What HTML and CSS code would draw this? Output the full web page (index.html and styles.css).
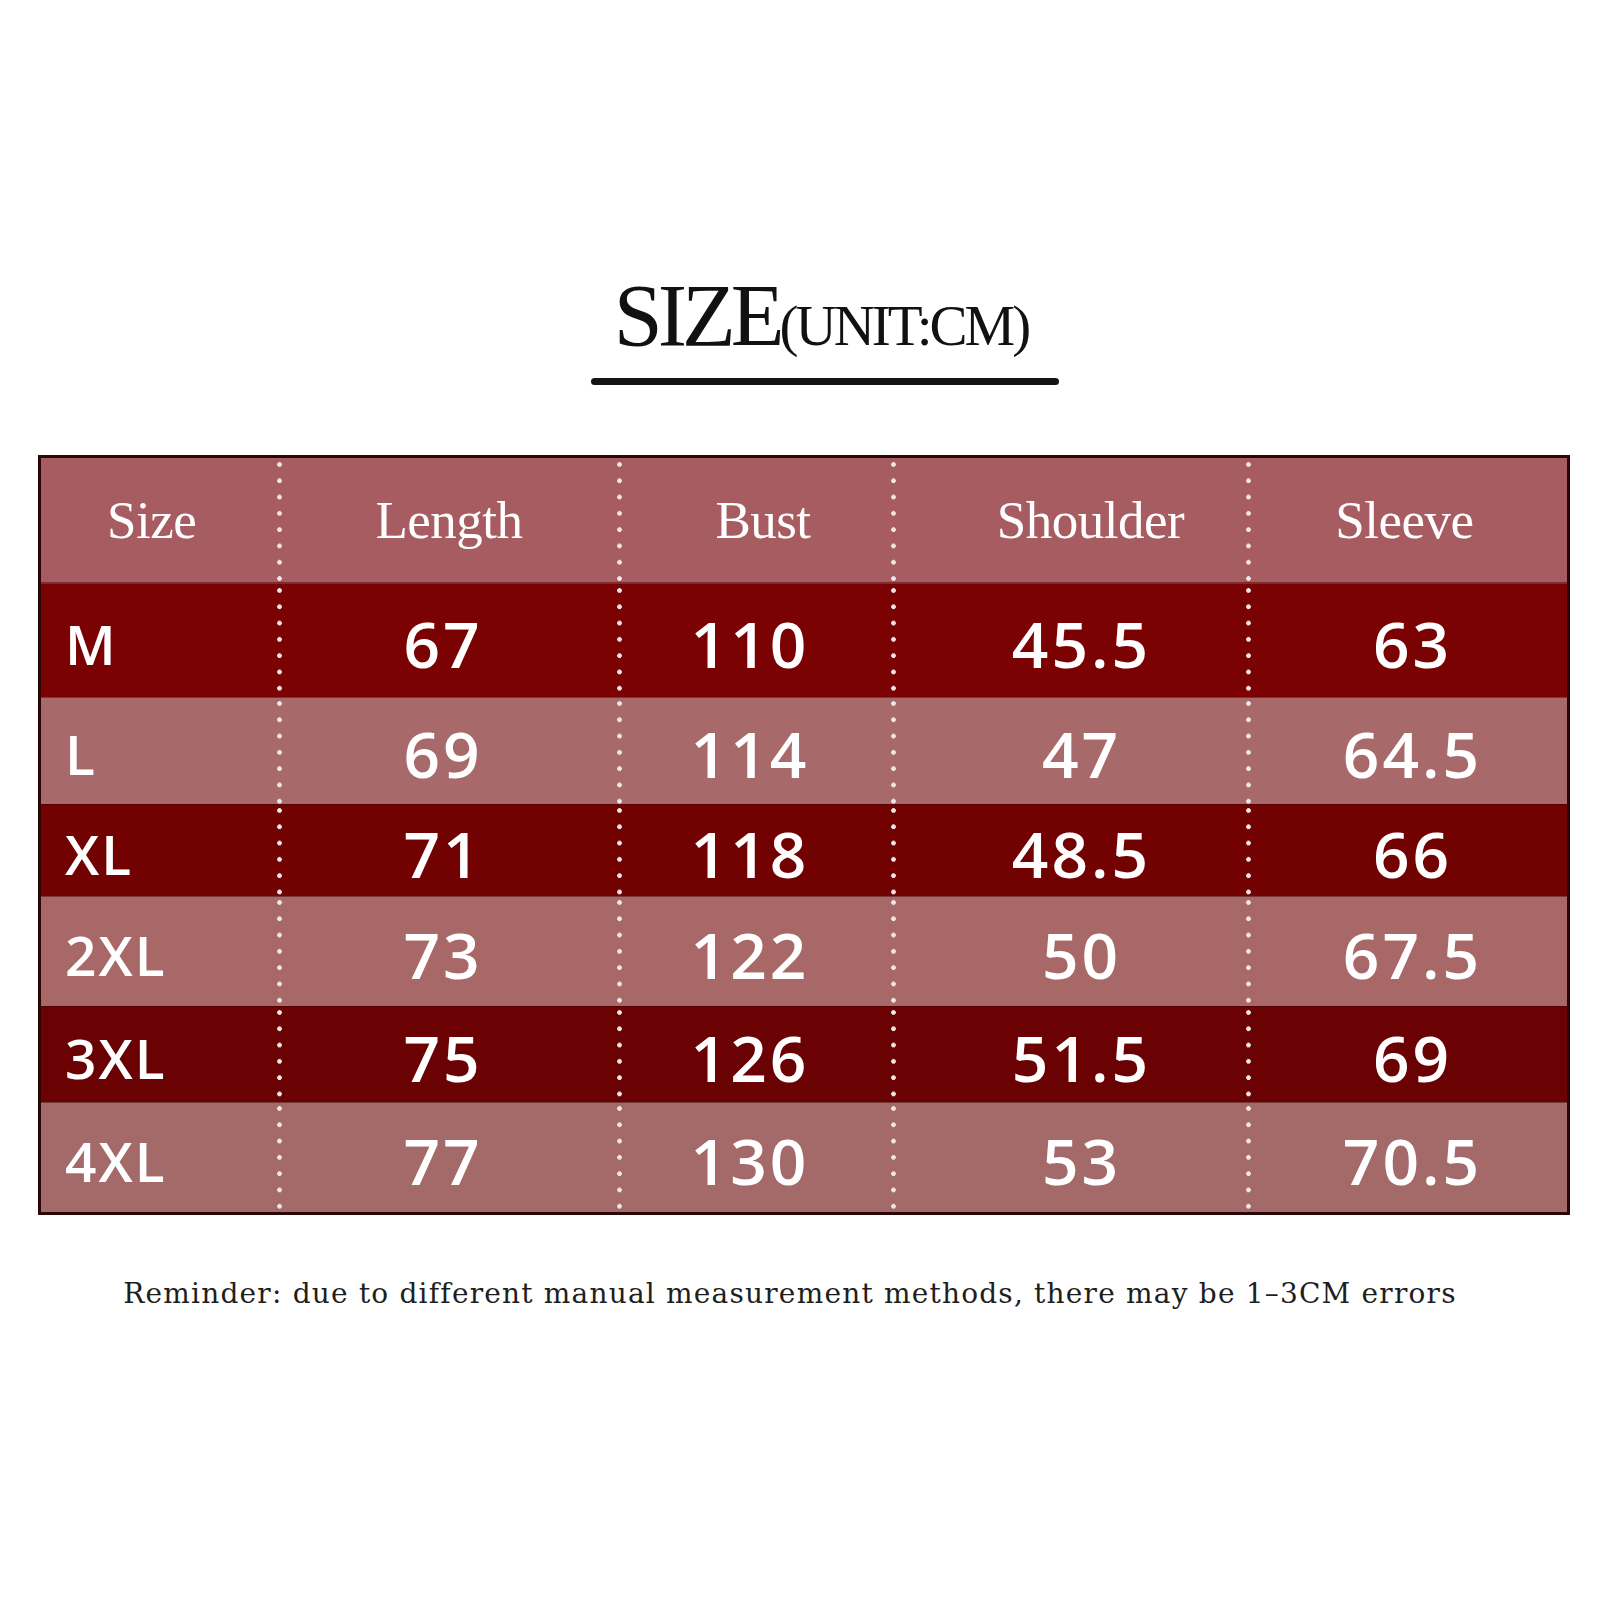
FILE: index.html
```html
<!DOCTYPE html>
<html lang="en">
<head>
<meta charset="utf-8">
<title>Size chart</title>
<link rel="stylesheet" href="styles.css">
</head>
<body>
<main class="page">
  <header class="heading">
    <h1 class="title"><span class="title-main">SIZE</span><span class="title-unit">(UNIT:CM)</span></h1>
    <div class="rule"></div>
  </header>

  <section class="chart">
    <div class="row row-head">
      <div class="cell cell-first">Size</div>
      <div class="cell">Length</div>
      <div class="cell">Bust</div>
      <div class="cell">Shoulder</div>
      <div class="cell">Sleeve</div>
    </div>
    <div class="row row-dark row-m">
      <div class="cell cell-first">M</div>
      <div class="cell">67</div>
      <div class="cell">110</div>
      <div class="cell">45.5</div>
      <div class="cell">63</div>
    </div>
    <div class="row row-light row-l">
      <div class="cell cell-first">L</div>
      <div class="cell">69</div>
      <div class="cell">114</div>
      <div class="cell">47</div>
      <div class="cell">64.5</div>
    </div>
    <div class="row row-dark row-xl">
      <div class="cell cell-first">XL</div>
      <div class="cell">71</div>
      <div class="cell">118</div>
      <div class="cell">48.5</div>
      <div class="cell">66</div>
    </div>
    <div class="row row-light row-2xl">
      <div class="cell cell-first">2XL</div>
      <div class="cell">73</div>
      <div class="cell">122</div>
      <div class="cell">50</div>
      <div class="cell">67.5</div>
    </div>
    <div class="row row-dark row-3xl">
      <div class="cell cell-first">3XL</div>
      <div class="cell">75</div>
      <div class="cell">126</div>
      <div class="cell">51.5</div>
      <div class="cell">69</div>
    </div>
    <div class="row row-light row-4xl">
      <div class="cell cell-first">4XL</div>
      <div class="cell">77</div>
      <div class="cell">130</div>
      <div class="cell">53</div>
      <div class="cell">70.5</div>
    </div>
  </section>

  <p class="note">Reminder: due to different manual measurement methods, there may be 1–3CM errors</p>
</main>
</body>
</html>
```

FILE: styles.css
```css
html, body {
  margin: 0;
  padding: 0;
  background: #ffffff;
}

.page {
  width: 1606px;
  padding-top: 272px;
  box-sizing: border-box;
}

.heading {
  display: flex;
  flex-direction: column;
  align-items: center;
  padding-left: 36px;
}

.title {
  margin: 0;
  font-family: "Liberation Serif", "Times New Roman", serif;
  font-weight: normal;
  font-size: 88px;
  color: #111111;
  line-height: 88px;
  white-space: nowrap;
}

.title-main {
  letter-spacing: -5px;
}

.title-unit {
  font-size: 57px;
  line-height: 1;
  letter-spacing: -3px;
}

.rule {
  width: 468px;
  height: 7px;
  margin-top: 18px;
  margin-left: 8px;
  border-radius: 4px;
  background: #141414;
}

.chart {
  margin: 70px 0 0 38px;
  width: 1532px;
  border: 3px solid #2a0707;
  box-sizing: border-box;
}

.row {
  display: grid;
  grid-template-columns: 236px 340px 274px 355px 1fr;
  color: #ffffff;
}

.cell {
  display: flex;
  align-items: center;
  justify-content: center;
  background-image: radial-gradient(circle at 2.5px 2.5px, #f1e6e6 2px, rgba(255,255,255,0) 2.7px);
  background-size: 5px 16.3px;
  background-repeat: repeat-y;
  background-position: 0 4px;
  font-family: "Open Sans", "Liberation Sans", sans-serif;
  font-weight: 600;
  font-size: 64px;
  letter-spacing: 3px;
  padding-top: 6px;
  box-sizing: border-box;
}

.cell:nth-child(2),
.cell:nth-child(3) {
  padding-right: 8px;
}

.cell:nth-child(4) {
  padding-left: 26px;
}

.cell:nth-child(5) {
  padding-left: 12px;
}

.cell-first {
  justify-content: flex-start;
  background-image: none;
  padding-left: 24px;
  font-weight: 600;
  font-size: 55px;
  letter-spacing: 2px;
}

.row-head {
  height: 126px;
  background: #a65c60;
  border-bottom: 2px solid #7d2d30;
  box-sizing: border-box;
}

.row-head .cell {
  padding-top: 0;
  font-family: "Liberation Serif", "Times New Roman", serif;
  font-weight: normal;
  font-size: 53px;
  letter-spacing: -0.5px;
}

.row-head .cell-first {
  padding-left: 66px;
}

.row-head .cell:nth-child(2) {
  padding-left: 4px;
  padding-right: 0;
}

.row-head .cell:nth-child(3) {
  padding-left: 18px;
  padding-right: 0;
}

.row-head .cell:nth-child(4) {
  padding-left: 44px;
}

.row-head .cell:nth-child(5) {
  padding-left: 0;
  padding-right: 4px;
}

.row-dark { background: #760202; }
.row-light { background: #a7696a; }

.row-m { height: 113px; background: #7a0203; }
.row-l { height: 107px; }
.row-xl { height: 92px; background: #720102; }
.row-2xl { height: 110px; background: #a86868; }
.row-3xl { height: 96px; background: #6a0102; }
.row-4xl { height: 110px; background: #a46969; }

.row-dark + .row-light,
.row-light + .row-dark {
  box-shadow: inset 0 1px 0 rgba(60, 0, 0, 0.45);
}

.note {
  margin: 63px 0 0 0;
  padding-right: 26px;
  text-align: center;
  font-family: "DejaVu Serif", "Liberation Serif", serif;
  font-size: 28px;
  line-height: 32px;
  letter-spacing: 1.2px;
  color: #1e1e1e;
}
```
